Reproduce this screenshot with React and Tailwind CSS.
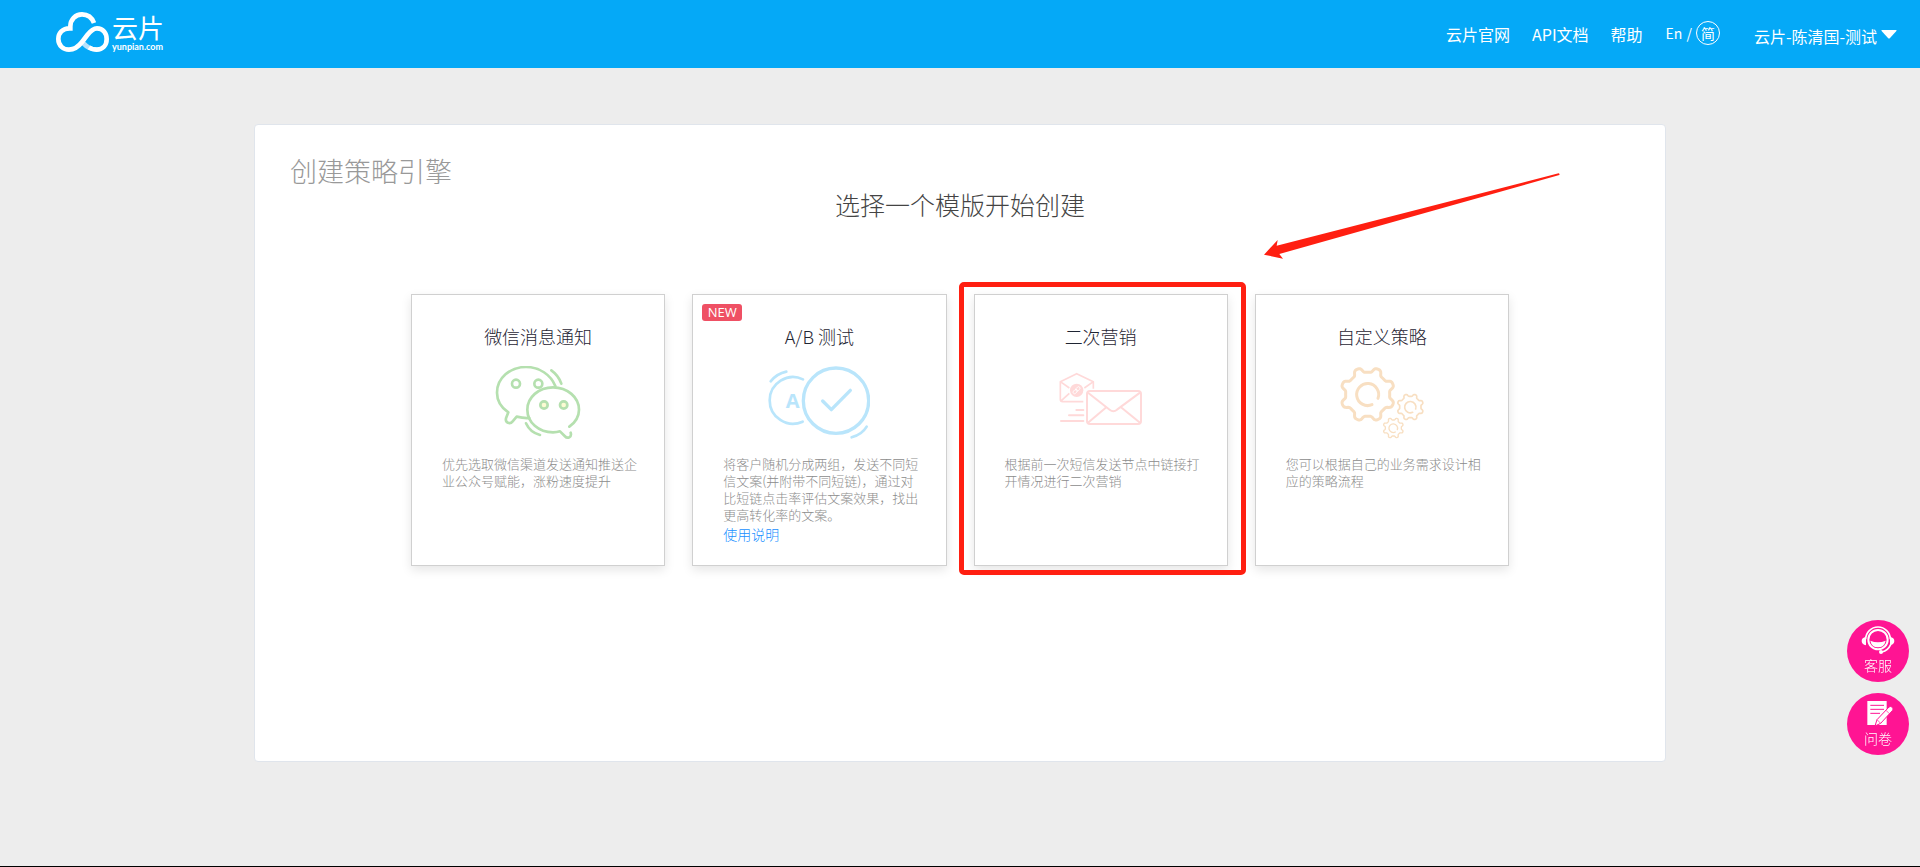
import React from "react";

function gearPath(cx, cy, root, tip, teeth) {
  const steps = teeth * 24;
  const mid = (root + tip) / 2;
  const amp = (tip - root) / 2;
  const points = [];
  for (let i = 0; i < steps; i++) {
    const a = (i / steps) * Math.PI * 2;
    const r = mid - amp * Math.tanh(2.2 * Math.cos(a * teeth) + 0.5);
    points.push(`${(cx + r * Math.cos(a)).toFixed(1)} ${(cy + r * Math.sin(a)).toFixed(1)}`);
  }
  return `M${points.join("L")}Z`;
}

function Logo() {
  return (
    <a href="#" className="flex items-start gap-[3px] text-white" aria-label="云片 yunpian.com">
      <svg viewBox="168 36 159 120" className="h-10 w-[53px]" fill="none" stroke="#fff" strokeWidth="14">
        <path d="M246 126C262 142 272 149 290 149" stroke="#b9e2fb" />
        <path d="M282 69C276 53 263 43 246 43C226 43 211 59 211 79V85C187 84 175 100 175 117C175 137 190 149 207 149C224 149 236 139 246 126L262 105C272 92 280 85 291 85C309 85 320 99 320 117C320 136 308 149 290 149C281 149 274 147 267 142" />
      </svg>
      <span className="flex flex-col">
        <span className="text-[26px] leading-[30px]">云片</span>
        <span className="font-['Lato','Noto_Sans_CJK_SC',sans-serif] text-[9px] font-bold leading-[10px]">yunpian.com</span>
      </span>
    </a>
  );
}

function Header() {
  return (
    <header className="flex h-[68px] items-center justify-between bg-[#05a9f7] pl-14 pr-[23px] text-white">
      <div className="self-start pt-3">
        <Logo />
      </div>
      <nav className="flex items-center text-base leading-6">
        <a href="#">云片官网</a>
        <a href="#" className="ml-[22px]">API文档</a>
        <a href="#" className="ml-[22px]">帮助</a>
        <div className="ml-[23px] flex items-center gap-1 pb-[2px] text-sm">
          <button type="button">En</button>
          <span>/</span>
          <button type="button" className="flex size-6 items-center justify-center rounded-full border border-white">简</button>
        </div>
        <button type="button" className="ml-[34px] flex items-center gap-1 pt-1">
          云片-陈清国-测试
          <svg viewBox="0 0 16 9" className="mb-1 h-[9px] w-4" fill="#fff">
            <path d="M1 0H15Q16 0 15.4 1L9 8Q8 9 7 8L.6 1Q0 0 1 0Z" />
          </svg>
        </button>
      </nav>
    </header>
  );
}

function ChatIcon() {
  return (
    <svg viewBox="261 258 306 222" className="h-[74px] w-[102px]" fill="none" stroke="#b5e0af" strokeWidth="8" strokeLinecap="round" strokeLinejoin="round">
      <path d="M466 318C452 284 418 261 378 261C330 261 291 294 291 338C291 362 304 383 325 397L318 415C315 428 330 434 338 424L350 410C362 413 374 415 388 414" />
      <path d="M508 440C526 427 537 410 537 389C537 352 502 322 459 322C416 322 382 352 382 389C382 427 416 457 459 457C466 457 474 456 480 454L494 468C503 478 516 472 512 458" />
      <circle cx="348" cy="311" r="12" />
      <circle cx="415" cy="311" r="12" />
      <circle cx="432" cy="375" r="11" fill="#fdfbd3" />
      <circle cx="491" cy="375" r="11" fill="#fdfbd3" />
      <path d="M454 271C468 281 478 293 484 311M378 430C386 448 400 460 420 465" />
    </svg>
  );
}

function AbTestIcon() {
  return (
    <svg viewBox="264 258 306 222" className="h-[74px] w-[102px]" fill="none" stroke="#b9e5fb" strokeWidth="8" strokeLinecap="round" strokeLinejoin="round">
      <circle cx="468" cy="362" r="98" strokeWidth="10" />
      <path d="M428 363L454 389L511 331" strokeWidth="10" />
      <path d="M369 298A70 70 0 1 0 368 425M272 304C285 288 300 279 319 275M515 472C534 467 550 457 560 440" />
      <text x="338" y="384" textAnchor="middle" fill="#b9e5fb" stroke="none" className="font-['Open_Sans',sans-serif] text-[60px] font-bold">A</text>
    </svg>
  );
}

function MailIcon() {
  return (
    <svg viewBox="299 288 306 222" className="h-[74px] w-[102px]" fill="none" stroke="#ffd9d9" strokeWidth="6" strokeLinejoin="round">
      <path d="M399 395H337Q330 395 330 388V335L379 311L429 335V356M330 335L357 354M429 335L402 354M333 392L357 370" strokeWidth="5" />
      <circle cx="379" cy="361" r="20" fill="#ffd9d9" stroke="none" />
      <g stroke="#fff" strokeWidth="2.5" transform="rotate(-45 379 361)">
        <rect x="366" y="356" width="15" height="9" rx="4.5" />
        <rect x="377" y="356" width="15" height="9" rx="4.5" />
      </g>
      <rect x="410" y="363" width="162" height="99" rx="9" />
      <path d="M413 368L478 419Q489 428 500 419L569 368M413 458L468 412M569 458L512 412" />
      <path d="M378 420H399M356 436H399M332 453H399" strokeLinecap="round" />
    </svg>
  );
}

function GearsIcon() {
  return (
    <svg viewBox="273 258 306 222" className="h-[74px] w-[102px]" fill="none" stroke="#f8dfc2" strokeLinecap="round" strokeLinejoin="round">
      <path d={gearPath(383, 343, 66, 82, 8)} strokeWidth="9" />
      <path d="M414 355A33 33 0 1 0 396 374" strokeWidth="9" />
      <path d={gearPath(511, 381, 32, 40, 8)} strokeWidth="5" />
      <path d="M527 387A17 17 0 1 0 518 397" strokeWidth="5" />
      <path d={gearPath(460, 444, 24, 31, 8)} strokeWidth="4" />
      <path d="M472 449A13 13 0 1 0 466 456" strokeWidth="4" />
    </svg>
  );
}

const templates = [
  { title: "微信消息通知", Icon: ChatIcon, text: "优先选取微信渠道发送通知推送企业公众号赋能，涨粉速度提升" },
  {
    title: "A/B 测试",
    Icon: AbTestIcon,
    text: "将客户随机分成两组，发送不同短信文案(并附带不同短链)，通过对比短链点击率评估文案效果，找出更高转化率的文案。",
    isNew: true,
    link: "使用说明",
  },
  { title: "二次营销", Icon: MailIcon, text: "根据前一次短信发送节点中链接打开情况进行二次营销", marked: true },
  { title: "自定义策略", Icon: GearsIcon, text: "您可以根据自己的业务需求设计相应的策略流程" },
];

function TemplateCard({ title, Icon, text, isNew, link, marked }) {
  return (
    <article className="relative flex min-h-[272px] flex-col items-center border border-[#d0d0d0] bg-white pt-[29px] shadow-[0_4px_10px_rgba(0,0,0,0.1)]">
      {isNew && (
        <span className="absolute left-[9px] top-[9px] flex h-[17px] w-10 items-center justify-center rounded-[3px] bg-[#ef5064] font-['Open_Sans',sans-serif] text-[13px] font-medium text-white">
          NEW
        </span>
      )}
      <h3 className="text-lg font-light leading-6 text-[#1f2533]">{title}</h3>
      <div className="mt-[18px]">
        <Icon />
      </div>
      <div className="mt-[15px] w-full pl-[30px] pr-[26px]">
        <p className="text-[13px] font-light leading-[17px] text-[#8c8c8c]">{text}</p>
        {link && (
          <a href="#" className="mt-px block text-sm font-light leading-5 text-[#1890ff]">
            {link}
          </a>
        )}
      </div>
      {marked && <div className="pointer-events-none absolute -bottom-[10px] -left-4 -right-[19px] -top-[13px] rounded-[5px] border-5 border-[#ff1f11]" />}
    </article>
  );
}

function FloatingActions() {
  const style = "flex size-[62px] flex-col items-center rounded-full bg-[#ff1493] text-sm font-light leading-5 text-white";
  return (
    <aside className="fixed bottom-28 right-[11px] flex flex-col gap-[11px]">
      <button type="button" className={style}>
        <svg viewBox="123 78 102 87" className="mt-[6px] h-[29px] w-[34px]" fill="none" stroke="#fff">
          <path d="M137 118A37 37 0 0 1 211 118" strokeWidth="5" />
          <circle cx="174" cy="119" r="29" strokeWidth="6" />
          <path d="M151 122Q174 132 197 122Q193 142 174 142Q155 142 151 122Z" fill="#fff" stroke="none" />
          <path d="M138 110V136Q125 133 125 123Q125 113 138 110ZM210 110V136Q223 133 223 123Q223 113 210 110Z" fill="#fff" stroke="none" />
          <path d="M212 134Q204 152 186 156" strokeWidth="5" />
          <circle cx="183" cy="156" r="6" fill="#fff" stroke="none" />
        </svg>
        <span>客服</span>
      </button>
      <button type="button" className={style}>
        <svg viewBox="123 297 102 87" className="mt-[6px] h-[29px] w-[34px]">
          <path d="M142 303H200V375H142Z" fill="#fff" />
          <path d="M151 316H192M151 328H192M151 340H180" stroke="#ff1493" strokeWidth="3" />
          <path d="M207 321Q212 317 217 322Q222 327 217 332L182 370L165 378L171 359Z" fill="#fff" stroke="#ff1493" strokeWidth="3" />
          <path d="M171 359L182 370M198 331L208 341" stroke="#ff1493" strokeWidth="2" />
        </svg>
        <span>问卷</span>
      </button>
    </aside>
  );
}

export default function App() {
  return (
    <div className="flex min-h-screen flex-col border-b border-black bg-[#ededed] font-['Noto_Sans_CJK_SC',sans-serif]">
      <Header />
      <main className="relative mx-auto mt-14 min-h-[638px] w-full max-w-[1412px] rounded-[4px] border border-[#e0e5ec] bg-white pt-8">
        <h1 className="pl-[35px] text-[27px] font-light leading-[27px] text-[#999]">创建策略引擎</h1>
        <h2 className="mt-[5px] text-center text-[25px] font-light leading-[30px] text-[#444]">选择一个模版开始创建</h2>
        <section className="mx-auto mt-[75px] grid max-w-[1098px] grid-cols-4 gap-[27px]">
          {templates.map((t) => (
            <TemplateCard key={t.title} {...t} />
          ))}
        </section>
        <svg viewBox="72 69 888 258" className="pointer-events-none absolute right-[105px] top-12 h-[86px] w-[296px]" fill="#ff1f11">
          <path d="M72 314L113 270L110 287L956 70Q960 72 958 75L118 312L129 326Z" />
        </svg>
      </main>
      <FloatingActions />
    </div>
  );
}
